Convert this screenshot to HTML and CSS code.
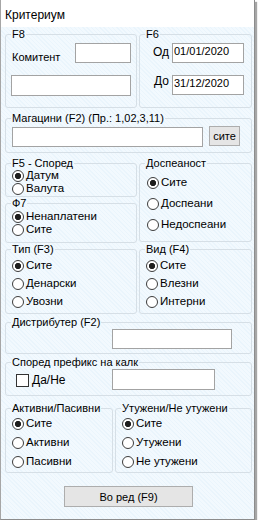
FILE: index.html
```html
<!DOCTYPE html>
<html lang="mk">
<head>
    <meta charset="UTF-8">
    <title>Критериум</title>
    <link rel="stylesheet" href="styles.css">
</head>
<body>
    <div class="window">
        <div class="title">Критериум</div>

        <div class="panel">
            <div class="row">
                <fieldset class="box w-left f8">
                    <legend>F8</legend>
                    <div class="komitent">
                        <label>Комитент</label>
                        <input type="text" class="txt txt-kom">
                    </div>
                    <input type="text" class="txt txt-kom-name">
                </fieldset>
                <fieldset class="box w-right f6">
                    <legend>F6</legend>
                    <div class="dates">
                        <label class="lbl-od">Од</label>
                        <input type="text" class="txt txt-date" value="01/01/2020">
                        <label class="lbl-do">До</label>
                        <input type="text" class="txt txt-date date-2" value="31/12/2020">
                    </div>
                </fieldset>
            </div>

            <div class="row mt4">
                <fieldset class="box w-full magacini">
                    <legend>Магацини (F2) (Пр.: 1,02,3,11)</legend>
                    <div class="mag-line">
                        <input type="text" class="txt txt-mag">
                        <button class="btn btn-site">сите</button>
                    </div>
                </fieldset>
            </div>

            <div class="row mt4">
                <div class="col">
                    <fieldset class="box w-left f5">
                        <legend>F5 - Според</legend>
                        <div class="radios">
                            <label class="opt"><input type="radio" name="f5" checked>Датум</label>
                            <label class="opt"><input type="radio" name="f5">Валута</label>
                        </div>
                    </fieldset>
                    <fieldset class="box w-left f7">
                        <legend>Ф7</legend>
                        <div class="radios">
                            <label class="opt"><input type="radio" name="f7" checked>Ненаплатени</label>
                            <label class="opt"><input type="radio" name="f7">Сите</label>
                        </div>
                    </fieldset>
                </div>
                <fieldset class="box w-right dospeanost">
                    <legend>Доспеаност</legend>
                    <div class="radios radios-wide">
                        <label class="opt"><input type="radio" name="dosp" checked>Сите</label>
                        <label class="opt"><input type="radio" name="dosp">Доспеани</label>
                        <label class="opt"><input type="radio" name="dosp">Недоспеани</label>
                    </div>
                </fieldset>
            </div>

            <div class="row">
                <fieldset class="box w-left tip">
                    <legend>Тип (F3)</legend>
                    <div class="radios radios-three">
                        <label class="opt"><input type="radio" name="tip" checked>Сите</label>
                        <label class="opt"><input type="radio" name="tip">Денарски</label>
                        <label class="opt"><input type="radio" name="tip">Увозни</label>
                    </div>
                </fieldset>
                <fieldset class="box w-right tip">
                    <legend>Вид (F4)</legend>
                    <div class="radios radios-three">
                        <label class="opt"><input type="radio" name="vid" checked>Сите</label>
                        <label class="opt"><input type="radio" name="vid">Влезни</label>
                        <label class="opt"><input type="radio" name="vid">Интерни</label>
                    </div>
                </fieldset>
            </div>

            <div class="row mt2">
                <fieldset class="box w-full distributer">
                    <legend>Дистрибутер (F2)</legend>
                    <input type="text" class="txt txt-dist">
                </fieldset>
            </div>

            <div class="row mt2">
                <fieldset class="box w-full prefix">
                    <legend>Според префикс на калк</legend>
                    <div class="prefix-line">
                        <label class="chk"><input type="checkbox">Да/Не</label>
                        <input type="text" class="txt txt-prefix">
                    </div>
                </fieldset>
            </div>

            <div class="row mt6">
                <fieldset class="box aktivni">
                    <legend>Активни/Пасивни</legend>
                    <div class="radios radios-low">
                        <label class="opt"><input type="radio" name="akt" checked>Сите</label>
                        <label class="opt"><input type="radio" name="akt">Активни</label>
                        <label class="opt"><input type="radio" name="akt">Пасивни</label>
                    </div>
                </fieldset>
                <fieldset class="box utuzeni">
                    <legend>Утужени/Не утужени</legend>
                    <div class="radios radios-low">
                        <label class="opt"><input type="radio" name="utu" checked>Сите</label>
                        <label class="opt"><input type="radio" name="utu">Утужени</label>
                        <label class="opt"><input type="radio" name="utu">Не утужени</label>
                    </div>
                </fieldset>
            </div>

            <button class="btn btn-ok">Во ред (F9)</button>
        </div>
    </div>
</body>
</html>
```

FILE: styles.css
```css
* {
    margin: 0;
    padding: 0;
    box-sizing: border-box;
}

body {
    font-family: 'Liberation Sans', Arial, sans-serif;
    font-size: 11px;
    color: #000;
    background: #fff;
}

.window {
    width: 255px;
    height: 520px;
    display: flex;
    flex-direction: column;
    border-left: 1px solid #a6a6a6;
    border-right: 1px solid #8c8c8c;
    border-bottom: 1px solid #8c8c8c;
    box-shadow: 2px 2px 1px rgba(0, 0, 0, 0.35);
}

.title {
    height: 27px;
    padding: 8px 0 0 4px;
    font-size: 12px;
    line-height: 14px;
    background: #fff;
}

.panel {
    flex: 1;
    display: flex;
    flex-direction: column;
    padding: 1px 0 0 4px;
    background-color: #f2f9fe;
    background-image: repeating-linear-gradient(45deg, rgba(210, 232, 246, 0.25) 0 1px, transparent 1px 3px);
}

.row {
    display: flex;
    gap: 2px;
}

.mt2 { margin-top: 2px; }
.mt4 { margin-top: 4px; }
.mt6 { margin-top: 6px; }

.col {
    display: flex;
    flex-direction: column;
}

/* group boxes */
.box {
    border: 1px solid #d6dfe6;
    border-radius: 3px;
    padding: 0 0 0 6px;
    min-width: 0;
}

.box legend {
    font-size: 11px;
    line-height: 13px;
    padding: 0 1px;
    margin-left: -1px;
}

.w-left { width: 132px; }
.w-right { width: 113px; }
.w-full { width: 247px; }

.f8, .f6 { height: 80px; }
.magacini { height: 41px; }
.f5 { height: 40px; }
.f7 { height: 46px; }
.dospeanost { height: 85px; }
.tip { height: 71px; }
.distributer { height: 38px; }
.prefix { height: 40px; }
.aktivni { width: 108px; height: 71px; }
.utuzeni { width: 137px; height: 71px; }

/* text boxes */
.txt {
    display: block;
    height: 20px;
    border: 1px solid #a3a3a3;
    background: #fff;
    font-family: 'Liberation Sans', Arial, sans-serif;
    font-size: 11px;
    padding: 0 2px;
    outline: none;
}

.komitent {
    display: grid;
    grid-template-columns: 63px 56px;
    margin-top: 2px;
}

.komitent label {
    margin-top: 8px;
}

.txt-kom-name {
    width: 120px;
    height: 21px;
    margin: 12px 0 0 -1px;
}

.dates {
    display: grid;
    grid-template-columns: 22px 72px;
    column-gap: 3px;
    row-gap: 12px;
    margin-top: 2px;
    padding-left: 1px;
}

.dates label {
    text-align: right;
    font-size: 12px;
    line-height: 14px;
}

.lbl-od { margin-top: 2px; }
.lbl-do { margin-top: -1px; }

.txt-date {
    width: 72px;
    padding: 0 1px 4px;
    line-height: 14px;
}

.mag-line {
    display: flex;
    gap: 6px;
    margin-top: 1px;
}

.txt-mag {
    width: 191px;
    margin-top: 1px;
}

.btn {
    font-family: 'Liberation Sans', Arial, sans-serif;
    font-size: 11px;
    background: #e5e5e5;
    border: 1px solid #adadad;
    color: #000;
}

.btn-site {
    width: 31px;
    height: 20px;
}

.btn-ok {
    width: 129px;
    height: 21px;
    margin: 13px 0 0 59px;
}

/* radios */
.radios {
    display: flex;
    flex-direction: column;
}

.radios-wide {
    margin-top: 6px;
    gap: 8px;
    padding-left: 1px;
}

.radios-three {
    margin-top: 3px;
    gap: 5px;
}

.radios-low {
    margin-top: 2px;
    gap: 6px;
}

.f5 .radios { margin-top: -1px; }

.opt {
    display: flex;
    align-items: center;
    height: 13px;
    line-height: 13px;
    font-size: 11.5px;
    white-space: nowrap;
}

.opt input {
    appearance: none;
    width: 12px;
    height: 12px;
    margin-right: 2px;
    border: 1px solid #3c3c3c;
    border-radius: 50%;
    background: #fff;
    flex: none;
}

.opt input:checked {
    background: radial-gradient(circle, #1e1e1e 0 2.8px, #fff 3.4px);
}

/* checkbox row */
.prefix-line {
    display: flex;
    align-items: flex-start;
}

.chk {
    display: flex;
    align-items: center;
    margin: 5px 0 0 4px;
    width: 96px;
    font-size: 12px;
    line-height: 13px;
}

.chk input {
    appearance: none;
    width: 13px;
    height: 13px;
    margin-right: 3px;
    border: 1px solid #333;
    background: #fff;
}

.txt-dist {
    width: 120px;
    margin-left: 100px;
}

.txt-prefix {
    width: 103px;
    height: 21px;
}
```
